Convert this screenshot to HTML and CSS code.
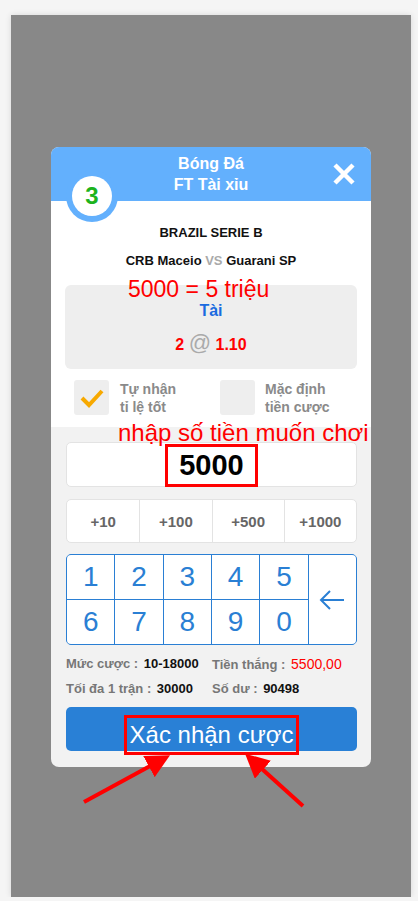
FILE: index.html
```html
<!DOCTYPE html>
<html>
<head>
    <title>Bóng Đá - FT Tài xỉu</title>
    <meta charset="utf-8">
    <meta name="viewport" content="width=device-width, initial-scale=1">
    <link rel="stylesheet" href="styles.css">
</head>
<body>
    <div class="screen">
        <div class="modal">
            <div class="modal-head">
                <div>Bóng Đá</div>
                <div>FT Tài xỉu</div>
                <div class="badge"><span>3</span></div>
                <svg class="close" width="24" height="24" viewBox="0 0 24 24">
                    <path d="M3 3 L21 21 M21 3 L3 21" stroke="#fff" stroke-width="4.5" fill="none"/>
                </svg>
            </div>

            <div class="match">
                <div class="league">BRAZIL SERIE B</div>
                <div class="teams">CRB Maceio <span class="vs">VS</span> Guarani SP</div>
                <div class="pick">
                    <div class="side">Tài</div>
                    <div class="odds">2 <span class="at">@</span> 1.10</div>
                </div>
                <div class="options">
                    <div class="opt opt-first">
                        <div class="box">
                            <svg width="35" height="35" viewBox="0 0 35 35">
                                <path d="M8 18 L15 25 L28 11" stroke="#f7a900" stroke-width="4" fill="none"/>
                            </svg>
                        </div>
                        <div class="opt-text">Tự nhận<br>tỉ lệ tốt</div>
                    </div>
                    <div class="opt">
                        <div class="box"></div>
                        <div class="opt-text">Mặc định<br>tiền cược</div>
                    </div>
                </div>
            </div>

            <div class="bet">
                <div class="amount"><span class="mark">5000</span></div>
                <div class="quick">
                    <div>+10</div>
                    <div>+100</div>
                    <div>+500</div>
                    <div>+1000</div>
                </div>
                <div class="keypad">
                    <div>1</div><div>2</div><div>3</div><div>4</div><div>5</div>
                    <div class="back">
                        <svg width="26" height="20" viewBox="0 0 26 20">
                            <path d="M2 10 H25 M11 1 L2 10 L11 19" stroke="#2a7fd4" stroke-width="2" fill="none"/>
                        </svg>
                    </div>
                    <div>6</div><div>7</div><div>8</div><div>9</div><div>0</div>
                </div>
                <div class="info">
                    <div><span class="lbl">Mức cược :</span> 10-18000</div>
                    <div><span class="lbl">Tiền thắng :</span> <span class="win">5500,00</span></div>
                    <div><span class="lbl">Tối đa 1 trận :</span> 30000</div>
                    <div><span class="lbl">Số dư :</span> 90498</div>
                </div>
                <div class="confirm"><span class="mark">Xác nhận cược</span></div>
            </div>

            <!-- ghi chú màu đỏ -->
            <div class="note note-1">5000 = 5 triệu</div>
            <div class="note note-2">nhập số tiền muốn chơi</div>
        </div>

        <svg class="arrows" width="400" height="882" viewBox="0 0 400 882">
            <defs>
                <marker id="head" markerWidth="6" markerHeight="6" refX="4" refY="3" orient="auto" markerUnits="strokeWidth">
                    <path d="M0 0 L6 3 L0 6 Z" fill="#f00"/>
                </marker>
            </defs>
            <line x1="73" y1="787" x2="152" y2="744" stroke="#f00" stroke-width="4" marker-end="url(#head)"/>
            <line x1="292" y1="791" x2="240" y2="744" stroke="#f00" stroke-width="4" marker-end="url(#head)"/>
        </svg>
    </div>
</body>
</html>
```
FILE: styles.css
```css
body { margin: 0; background: #f5f5f5; font-family: "Liberation Sans", Arial, sans-serif; }

.screen { position: relative; margin: 15px 0 0 11px; width: 400px; height: 882px; background: #888888; box-shadow: 0 0 6px rgba(0,0,0,0.12); display: flex; flex-direction: column; align-items: center; padding-top: 132px; box-sizing: border-box; }

.modal { position: relative; width: 320px; border-radius: 8px; background: #f2f2f2; }
.modal-head { position: relative; height: 54px; box-sizing: border-box; padding-top: 6px; background: #63b0fd; border-radius: 8px 8px 0 0; color: #fff; font-weight: bold; font-size: 16px; line-height: 21px; text-align: center; }
.badge { position: absolute; left: 15px; top: 23px; width: 52px; height: 52px; border-radius: 50%; background: #63b0fd; display: flex; align-items: center; justify-content: center; }
.badge span { width: 40px; height: 40px; border-radius: 50%; background: #fff; color: #1db31d; font-size: 24px; line-height: 40px; text-align: center; }
.close { position: absolute; left: 281px; top: 15px; }

.match { background: #fff; padding: 23px 14px 11px 14px; text-align: center; }
.league, .teams { font-size: 13px; font-weight: bold; line-height: 18px; color: #111; }
.teams { margin-top: 10px; }
.vs { color: #aaa; }
.pick { margin-top: 15px; height: 84px; box-sizing: border-box; padding-top: 16px; background: #eeeeee; border-radius: 6px; font-weight: bold; font-size: 16px; line-height: 20px; }
.side { color: #1a6be0; }
.odds { margin-top: 12px; color: #f00; }
.at { color: #aaa; font-size: 22px; font-weight: normal; }

.options { display: flex; margin-top: 11px; padding-left: 9px; text-align: left; }
.opt { display: flex; gap: 11px; }
.opt + .opt { gap: 10px; }
.opt-first { width: 146px; }
.box { width: 35px; height: 35px; background: #eeeeee; border-radius: 3px; }
.opt-text { font-size: 14px; font-weight: bold; line-height: 18px; color: #8a8a8a; }

.bet { padding: 15px 14px 16px 15px; }
.amount { height: 45px; box-sizing: border-box; background: #fff; border: 1px solid #e3e3e3; border-radius: 5px; display: flex; align-items: center; justify-content: center; padding-top: 2px; }
.amount .mark { font-size: 29px; font-weight: bold; color: #000; line-height: 37px; padding: 0 11px; border: 3px solid #f00; }

.quick { margin-top: 12px; height: 44px; display: grid; grid-template-columns: repeat(4, 1fr); background: #fff; border: 1px solid #e3e3e3; border-radius: 5px; box-sizing: border-box; }
.quick div { display: flex; align-items: center; justify-content: center; font-size: 15px; font-weight: bold; color: #666; }
.quick div + div { border-left: 1px solid #e3e3e3; }

.keypad { margin-top: 11px; height: 91px; box-sizing: border-box; display: grid; grid-template-columns: repeat(6, 1fr); grid-template-rows: 1fr 1fr; gap: 1px; background: #2a7fd4; border: 1px solid #2a7fd4; border-radius: 5px; overflow: hidden; }
.keypad div { background: #fff; display: flex; align-items: center; justify-content: center; font-size: 28px; color: #2a7fd4; }
.keypad .back { grid-column: 6; grid-row: 1 / span 2; }

.info { margin-top: 7px; display: grid; grid-template-columns: 146px 1fr; font-size: 13px; font-weight: bold; line-height: 24px; color: #111; }
.lbl { color: #777; margin-right: 2px; }
.win { color: #f00; font-weight: normal; font-size: 14px; }

.confirm { margin-top: 6px; height: 44px; box-sizing: border-box; padding-top: 8px; background: #2980d6; border-radius: 5px; display: flex; justify-content: center; align-items: flex-start; }
.confirm .mark { font-size: 24px; color: #fff; line-height: 34px; padding: 0 3px; border: 3px solid #f00; }

.note { position: absolute; color: #f00; font-size: 23px; line-height: 18px; white-space: nowrap; }
.note-1 { left: 77px; top: 133px; }
.note-2 { left: 67px; top: 277px; font-size: 24px; }

.arrows { position: absolute; left: 0; top: 0; pointer-events: none; }
```
